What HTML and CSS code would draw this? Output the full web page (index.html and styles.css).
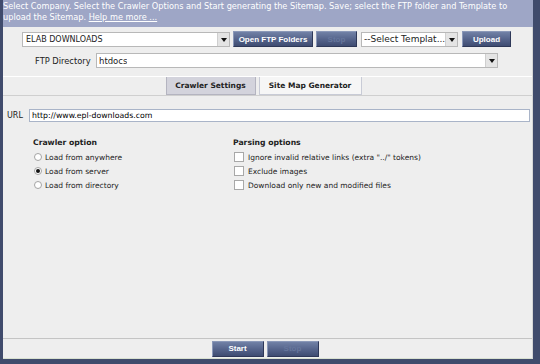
FILE: index.html
```html
<!DOCTYPE html>
<html lang="en">
<head>
  <meta charset="UTF-8" />
  <title>Sitemap Generator</title>
  <link rel="stylesheet" href="styles.css">
</head>
<body>
  <div class="window">
    <div class="intro">
      Select Company. Select the Crawler Options and Start generating the Sitemap. Save; select the FTP folder and Template to<br>
      upload the Sitemap. <a href="#">Help me more ...</a>
    </div>

    <div class="panel">
      <div class="toolbar">
        <div class="select company"><span>ELAB DOWNLOADS</span><i class="arrow"></i></div>
        <button class="btn ftp">Open FTP Folders</button>
        <button class="btn stop" disabled>Stop</button>
        <div class="select template"><span>--Select Templat...</span><i class="arrow"></i></div>
        <button class="btn upload">Upload</button>
      </div>

      <div class="dir-row">
        <label>FTP Directory</label>
        <div class="select dir"><span>htdocs</span><i class="arrow"></i></div>
      </div>

      <div class="tabs">
        <div class="tab active">Crawler Settings</div>
        <div class="tab">Site Map Generator</div>
      </div>

      <div class="url-row">
        <label>URL</label>
        <input class="url" value="http://www.epl-downloads.com" />
      </div>

      <div class="options">
        <div class="group crawler">
          <h4>Crawler option</h4>
          <div class="opt"><i class="radio"></i>Load from anywhere</div>
          <div class="opt"><i class="radio on"></i>Load from server</div>
          <div class="opt"><i class="radio"></i>Load from directory</div>
        </div>
        <div class="group parsing">
          <h4>Parsing options</h4>
          <div class="opt"><i class="check"></i>Ignore invalid relative links (extra "../" tokens)</div>
          <div class="opt"><i class="check"></i>Exclude images</div>
          <div class="opt"><i class="check"></i>Download only new and modified files</div>
        </div>
      </div>

      <div class="footer">
        <button class="btn start">Start</button>
        <button class="btn stop2" disabled>Stop</button>
      </div>
    </div>
  </div>
</body>
</html>
```

FILE: styles.css
```css
html, body {
  margin: 0;
  padding: 0;
  height: 100%;
  background: #404b6c;
  font-family: 'DejaVu Sans', Verdana, sans-serif;
  font-size: 8px;
  color: #222;
  overflow: hidden;
}

.window {
  height: 359px;
  margin: 0 7px 0 3px;
  display: flex;
  flex-direction: column;
}

.intro {
  height: 27px;
  box-sizing: border-box;
  padding: 1px 0 0 0;
  background: #9ea6c6;
  color: #fff;
  line-height: 11px;
  font-size: 8.2px;
  white-space: nowrap;
}

.intro a {
  color: #fff;
}

.panel {
  flex: 1;
  background: #eeeeee;
  border-right: 1px solid #d6d6d6;
  border-bottom: 1px solid #d8e0d0;
  display: flex;
  flex-direction: column;
}

.toolbar {
  display: flex;
  align-items: center;
  margin: 4px 0 0 19px;
  height: 16px;
}

.select {
  height: 15px;
  box-sizing: border-box;
  background: #fff;
  border: 1px solid #b8b8b8;
  display: flex;
  align-items: center;
  justify-content: space-between;
  padding-left: 3px;
}

.select span {
  white-space: nowrap;
  overflow: hidden;
}

.arrow {
  width: 11px;
  height: 13px;
  background: #e4e4e4;
  border-left: 1px solid #cfcfcf;
  position: relative;
  flex-shrink: 0;
}

.arrow::after {
  content: '';
  position: absolute;
  left: 3px;
  top: 5px;
  border-left: 3px solid transparent;
  border-right: 3px solid transparent;
  border-top: 4px solid #111;
}

.company {
  width: 208px;
}

.template {
  width: 97px;
  margin-left: 4px;
  font-size: 9px;
  padding-left: 2px;
}

.btn {
  height: 16px;
  box-sizing: border-box;
  border: 1px solid #2e3858;
  border-top-color: #8a98b8;
  border-left-color: #8a98b8;
  background: linear-gradient(#7181a6, #56658c 50%, #3f4c72);
  color: #fff;
  font-family: 'Liberation Sans', Arial, sans-serif;
  font-weight: bold;
  font-size: 8px;
  padding: 0;
  cursor: pointer;
}

.btn[disabled] {
  color: #66769c;
}

.ftp {
  width: 80px;
  margin-left: 3px;
}

.stop {
  width: 41px;
  margin-left: 3px;
}

.upload {
  width: 49px;
  margin-left: 4px;
}

.dir-row {
  display: flex;
  align-items: center;
  margin: 6px 0 0 32px;
  height: 15px;
}

.dir-row label {
  width: 61px;
  font-size: 8.3px;
}

.dir {
  width: 402px;
  font-size: 8.5px;
  padding-left: 2px;
}

.tabs {
  margin-top: 8px;
  height: 18px;
  border-top: 1px solid #fff;
  border-bottom: 1px solid #cfcfcf;
  display: flex;
  justify-content: center;
  gap: 3px;
  padding-right: 8px;
}

.tab {
  font-weight: bold;
  font-size: 7.5px;
  border: 1px solid #c8cbd6;
  border-top: 0;
  background: #f6f6f6;
  display: flex;
  align-items: center;
  justify-content: center;
  width: 101px;
}

.tab.active {
  width: 88px;
  background: #d3d3dc;
  border-color: #b4b4c0;
}

.url-row {
  display: flex;
  align-items: center;
  margin: 13px 0 0 4px;
  height: 13px;
}

.url-row label {
  width: 22px;
}

.url {
  width: 501px;
  height: 13px;
  box-sizing: border-box;
  border: 1px solid #a9b4c8;
  font-family: 'DejaVu Sans', Verdana, sans-serif;
  font-size: 7.8px;
  padding: 0 2px;
  outline: none;
}

.options {
  display: flex;
  margin: 15px 0 0 27px;
  flex: 1;
  font-size: 7.5px;
}

.group h4 {
  margin: 0 0 1px 0;
  font-size: 7.7px;
  height: 12px;
  line-height: 12px;
}

.crawler {
  width: 203px;
}

.crawler h4 {
  margin-left: 3px;
}

.opt {
  display: flex;
  align-items: center;
  height: 14px;
  white-space: nowrap;
}

.radio {
  width: 8px;
  height: 8px;
  border: 1px solid #a4a4a4;
  border-radius: 50%;
  background: #fff;
  margin: 0 3px 0 4px;
  box-sizing: border-box;
  position: relative;
}

.radio.on::after {
  content: '';
  position: absolute;
  left: 1px;
  top: 1px;
  width: 4px;
  height: 4px;
  border-radius: 50%;
  background: #111;
}

.check {
  width: 8px;
  height: 8px;
  border: 1px solid #a8a8a8;
  background: #fff;
  margin: 0 4px 0 1px;
}

.footer {
  height: 19px;
  border-top: 1px solid #c4c4c4;
  display: flex;
  align-items: center;
  justify-content: center;
  gap: 3px;
  padding-right: 5px;
}

.start, .stop2 {
  width: 52px;
}
```
